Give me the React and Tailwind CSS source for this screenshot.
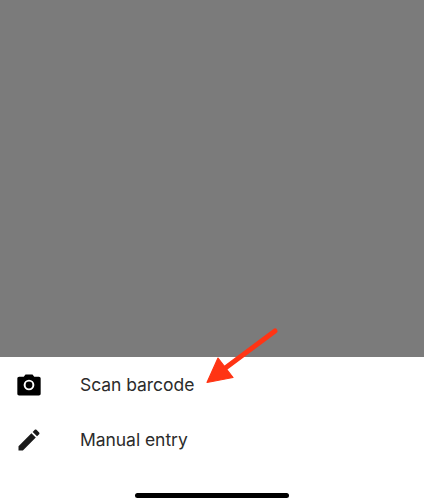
export default function App() {
  return (
    <div className="relative w-[424px] h-[500px] bg-white overflow-hidden font-['Inter',sans-serif] text-[#2b2b2b]">
      <div className="h-[357px] bg-[#7b7b7b]" />
      <ul className="flex flex-col">
        <li className="flex items-center h-[55px]">
          <div className="w-[80px] pl-[15px]">
            <svg width="28" height="28" viewBox="0 0 24 24" fill="#000" aria-hidden="true">
              <circle cx="12" cy="12" r="2.9" />
              <path fillRule="evenodd" d="M9 3 7.5 5H3.5C2.7 5 2 5.7 2 6.5v13c0 .8.7 1.5 1.5 1.5h17c.8 0 1.5-.7 1.5-1.5v-13c0-.8-.7-1.5-1.5-1.5h-4L15 3H9zm3 13.6a4.6 4.6 0 1 1 0-9.2 4.600 4.600 0 0 1 0 9.2z" />
            </svg>
          </div>
          <span className="text-[17.5px] tracking-[-0.05px] translate-y-[0.5px]">Scan barcode</span>
        </li>
        <li className="flex items-center h-[55px]">
          <div className="w-[80px] pl-[15px]">
            <svg width="28" height="28" viewBox="0 0 24 24" fill="#1a1a1a" aria-hidden="true">
              <path d="M3 17.25V21h3.75L17.81 9.94l-3.75-3.75L3 17.25zM20.71 7.04c.39-.39.39-1.02 0-1.41l-2.34-2.34c-.39-.39-1.02-.39-1.41 0l-1.83 1.83 3.75 3.75 1.83-1.83z" />
            </svg>
          </div>
          <span className="text-[17.5px] tracking-[-0.05px] translate-y-[0.5px]">Manual entry</span>
        </li>
      </ul>
      <div className="absolute left-[135px] bottom-[2px] w-[154px] h-[5px] rounded-full bg-black" />
      <svg className="absolute left-0 top-0" width="424" height="500" viewBox="0 0 424 500" aria-hidden="true">
        <path d="M275 331 224 369" stroke="#ff3414" strokeWidth="5" strokeLinecap="round" fill="none" />
        <path d="M207 382.5 218 358 233 377.500Z" fill="#ff3414" stroke="#ff3414" strokeWidth="1.2" strokeLinejoin="round" />
      </svg>
    </div>
  );
}
